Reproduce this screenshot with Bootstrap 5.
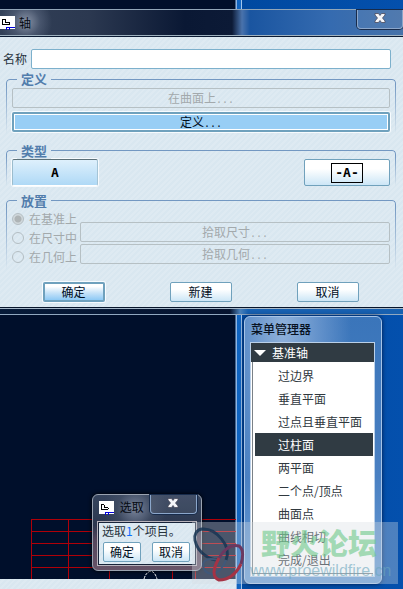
<!DOCTYPE html>
<html lang="zh-CN">
<head>
<meta charset="utf-8">
<meta name="viewport" content="width=device-width, initial-scale=1">
<title>轴</title>
<link href="https://cdn.jsdelivr.net/npm/bootstrap@5.3.0/dist/css/bootstrap.min.css" rel="stylesheet">
<style>
body{font:12px/16px "Noto Sans CJK SC",sans-serif;color:#27333d;background:#000f2b}
.desktop{min-height:100vh;background:linear-gradient(90deg,#000f2b 235px,#001a3a 235px,#8fb5e2 236px,#8fb5e2 237px,#0d62bd 237px,#1468c4 241px,#a3c6ec 241px,#a3c6ec 242px,#0049a0 242px,#0450ad)}
.scene{left:0;bottom:0;width:236px;height:72px}
.strip{left:0;bottom:0;width:236px;height:10px}
.striped,.strip{background:repeating-linear-gradient(135deg,#d9e7f0 0 2px,#deeaf2 2px 4px)}
.axis-win{padding-top:9px}
.axis-frame{border-top:1px solid #91a6b8;border-bottom:1px solid #91a8c0;background:linear-gradient(90deg,#061a38,#061430 230px,#4a80b8 240px,#1760b0 248px,#1760b0);padding-bottom:6px}
.axis-title{height:27px;border-bottom:1px solid #0a1a33;box-shadow:inset 0 -1px #9fb2c0;background:radial-gradient(circle at 26px 12px,#8792a5,#59667e99 14px,#59667e00 26px),linear-gradient(90deg,#334158,#2b3850 90px,#0a1834 185px,#0c1a36 232px,#4a73ac 242px,#1a55a0 250px,#356bb0 330px,#4672a9)}
.win-name{font-size:12px;color:#050a12}
.close-btn{height:19px;width:46px;padding:0 0 2px;border:1px solid #8ba6ca;border-top:0;border-radius:0 0 4px 4px;background:#ffffff10;box-shadow:0 0 0 1px #172b4b;line-height:0}
.axis-body{padding:12px 7px 5px 6px;border-bottom:1px solid #07152b;box-shadow:0 1px #a7b8c9}
.name-row{margin:0 5px 2px -3px;gap:4px}
.name-box{height:20px;padding:0 4px;font-size:12px;border:1px solid #7cb0cc;border-radius:2px;background:#fff}
.group{position:relative;padding:0 6px 2px;margin-bottom:9px}
.group::before{content:"";position:absolute;inset:-9px 0 0 0;border:1px solid #7398c2;border-bottom:0;border-radius:4px 4px 0 0;-webkit-mask:linear-gradient(#000 6px,transparent);mask:linear-gradient(#000 6px,transparent);pointer-events:none}
.group legend{position:relative;z-index:1;margin:0 0 1px 11px;padding:0 4px;font-size:13px;line-height:16px;font-weight:700;color:#527dac;background:#dbe8f1}
.group>div{position:relative}
.group.types{padding-bottom:0;margin-bottom:7px}
.group.place{padding-bottom:4px;margin-bottom:12px}
.group.types legend,.group.place legend{margin-bottom:0}
.group legend{margin-left:5px}
.ui-btn{height:20px;padding:0 6px;border:1px solid #70a1bc;border-radius:2px;background:linear-gradient(#fff 35%,#cce6f6);color:#000d1c;font-size:12px;line-height:16px;white-space:nowrap;text-align:center}
.ui-btn:disabled{background:transparent;border-color:#b6c0c4;color:#a3a9ac}
.ui-btn.strong{border:2px solid #6fa1bd;box-shadow:0 0 0 1px #f7fbfe}
.ui-btn.wide{background:#98cef5;box-shadow:0 0 0 1px #f7fbfe,inset 0 0 0 1px #fff}
.ui-btn.ok{background:linear-gradient(#fff 15%,#c7e3f8 55%,#8dc9f5)}
.dots{font:10px/12px "Liberation Mono",monospace}
.stack{gap:4px}
.type-btn{width:86px;height:27px;padding:0;font:bold 13px/16px "DejaVu Sans Mono",monospace;color:#000}
.type-btn.on{background:linear-gradient(#def0fc,#afd9f6);border-color:#5b7078 #a4c4d6 #fff #9bbccd;box-shadow:0 0 0 1px #f7fbfe}
.boxed{display:inline-block;border:1px solid #000;width:32px;height:20px;line-height:17px}
.place-row{gap:3px}
.opt{height:19px;gap:5px;color:#a3a9ac;white-space:nowrap}
.opt input{appearance:none;width:12px;height:12px;margin:0;border:1px solid #b4bec3;border-radius:50%}
.opt input:checked{background:radial-gradient(circle,#aeb4b6 0 3px,#d0d8dc 4px)}
.picks{gap:2px;padding-bottom:2px}
.actions{padding:0 5px 0 4px}
.actions .ui-btn{width:62px}
.menu-win{top:316px;left:244px;width:138px;padding:4px 6px 6px 5px;border:1px solid #a6c4e8;border-radius:6px;background:radial-gradient(ellipse at 38px 12px,#8fb1da 0,#6f9ad0aa 40px,#6f9ad000 68px),linear-gradient(#3a75ba,#4a80c2 60%,#6a9dd5);box-shadow:0 0 4px #001a45}
.menu-win h1{font-size:12px;line-height:16px;margin:0 0 5px 1px;color:#071222}
.menu-box{border:1px solid #bad0e9;background:#fff;padding:0 1px 2px}
.menu-head{height:19px;margin:0 -1px;gap:6px;padding-left:3px;background:#303b43;color:#fff}
.menu-list{padding:2px 0 2px 2px;border-left:1px solid #7a8187;border-bottom:1px solid #7a8187}
.menu-list a{display:block;height:23px;line-height:23px;padding-left:23px;color:#30383e;text-decoration:none;white-space:nowrap}
.menu-list a.on{background:#303b43;color:#fff}
.pick-win{left:92px;top:494px;width:110px;padding:0 4px 4px;border:1px solid #9aa3b1;border-radius:6px;background:radial-gradient(circle at 42px 14px,#778299,#48546a88 18px,#48546a00 32px),linear-gradient(#36445d,#2c3850 40%,#55465c 60%,#675468);box-shadow:0 0 4px #000}
.pick-title{height:26px;gap:6px}
.pick-title .logo{margin:6px 0 0 2px}
.pick-title .win-name{margin-top:4px}
.pick-title .close-btn{width:48px}
.pick-body{padding:1px 6px 3px 5px;border:1px solid #b8b4bc;box-shadow:inset 0 0 0 1px #172339}
.pick-text{margin:0 0 3px -1px}
.pick-body .ui-btn{width:38px;padding:0}
.stamp{left:192px;top:522px;width:206px;height:62px;background:#d8dde359}
.stamp-mark{left:-4px;top:2px}
.stamp-name{left:69px;top:0;font-size:29px;line-height:40px;font-weight:900;color:#6cc88999}
.stamp-url{left:58px;top:39px;font:16px/20px "Liberation Sans",sans-serif;color:#6aa6bd99}
</style>
<script src="https://cdn.jsdelivr.net/npm/bootstrap@5.3.0/dist/js/bootstrap.bundle.min.js"></script>
</head>
<body>
<div class="desktop position-relative overflow-hidden">
  <svg class="scene position-absolute" viewBox="0 0 236 72" fill="none" stroke="#b00008" aria-hidden="true">
    <path d="M31 2.500H236M31 14.500H236M31 26.500H236M31 38.500H236M31 50.500H236M31.500 2V62M68.500 2V62M109.500 50V62M172.500 50V62M195.500 50V62"/>
    <path d="M144 62q2-7 7-8q4 1 6 8" stroke="#fff" stroke-dasharray="3 1"/>
  </svg>
  <div class="strip position-absolute"></div>

  <section class="axis-win position-relative">
    <div class="axis-frame">
      <header class="axis-title d-flex justify-content-between">
        <div class="d-flex align-items-center gap-1">
          <svg class="logo" width="15" height="14" viewBox="0 0 15 14" shape-rendering="crispEdges" aria-hidden="true"><path d="M0 0h15v13H0z" fill="#fff"/><path d="M2.500 3.500h3v3h4v2h-7z" fill="none" stroke="#000"/><path d="M15 11.500H6.500V14M9.500 11v3" fill="none" stroke="#00d"/></svg>
          <span class="win-name">轴</span>
        </div>
        <button class="close-btn" type="button" aria-label="关闭"><svg width="12" height="10" viewBox="0 0 12 10" aria-hidden="true"><path d="M1 .500h3.500l1.500 2 1.500-2H11v1.500L8.500 5 11 8v1.500H7.500L6 7.500l-1.500 2H1V8l2.500-3L1 2z" fill="#f4f5f8" stroke="#4a4a5c" stroke-width=".8"/></svg></button>
      </header>
      <form class="axis-body striped" onsubmit="return false">
        <div class="name-row d-flex align-items-center">
          <label for="axisName" class="text-nowrap">名称</label>
          <input id="axisName" type="text" class="name-box flex-grow-1">
        </div>
        <fieldset class="group">
          <legend class="float-none w-auto d-table">定义</legend>
          <div class="stack d-flex flex-column">
            <button class="ui-btn" type="button" disabled>在曲面上<span class="dots">...</span></button>
            <button class="ui-btn strong wide" type="button">定义<span class="dots">...</span></button>
          </div>
        </fieldset>
        <fieldset class="group types">
          <legend class="float-none w-auto d-table">类型</legend>
          <div class="d-flex justify-content-between">
            <button class="ui-btn type-btn on" type="button">A</button>
            <button class="ui-btn type-btn" type="button"><span class="boxed">-A-</span></button>
          </div>
        </fieldset>
        <fieldset class="group place">
          <legend class="float-none w-auto d-table">放置</legend>
          <div class="place-row d-flex align-items-end">
            <div>
              <label class="opt d-flex align-items-center"><input type="radio" name="place" checked disabled>在基准上</label>
              <label class="opt d-flex align-items-center"><input type="radio" name="place" disabled>在尺寸中</label>
              <label class="opt d-flex align-items-center"><input type="radio" name="place" disabled>在几何上</label>
            </div>
            <div class="picks d-flex flex-column flex-grow-1">
              <button class="ui-btn" type="button" disabled>拾取尺寸<span class="dots">...</span></button>
              <button class="ui-btn" type="button" disabled>拾取几何<span class="dots">...</span></button>
            </div>
          </div>
        </fieldset>
        <div class="actions">
          <div class="row g-0">
            <div class="col d-flex justify-content-center"><button class="ui-btn strong ok" type="submit">确定</button></div>
            <div class="col d-flex justify-content-center"><button class="ui-btn" type="button">新建</button></div>
            <div class="col d-flex justify-content-center"><button class="ui-btn" type="button">取消</button></div>
          </div>
        </div>
      </form>
    </div>
  </section>

  <section class="menu-win position-absolute">
    <h1>菜单管理器</h1>
    <div class="menu-box">
      <div class="menu-head d-flex align-items-center"><svg width="12" height="6" viewBox="0 0 12 6" aria-hidden="true"><path d="M0 0h12L6 6z" fill="#fff"/></svg>基准轴</div>
      <nav class="menu-list">
        <a href="#">过边界</a>
        <a href="#">垂直平面</a>
        <a href="#">过点且垂直平面</a>
        <a href="#" class="on">过柱面</a>
        <a href="#">两平面</a>
        <a href="#">二个点/顶点</a>
        <a href="#">曲面点</a>
        <a href="#">曲线相切</a>
        <a href="#">完成/退出</a>
      </nav>
    </div>
  </section>

  <section class="pick-win position-absolute">
    <header class="pick-title d-flex align-items-start">
      <svg class="logo" width="15" height="14" viewBox="0 0 15 14" shape-rendering="crispEdges" aria-hidden="true"><path d="M0 0h15v13H0z" fill="#fff"/><path d="M2.500 3.500h3v3h4v2h-7z" fill="none" stroke="#000"/><path d="M15 11.500H6.500V14M9.500 11v3" fill="none" stroke="#00d"/></svg>
      <span class="win-name text-nowrap">选取</span>
      <button class="close-btn ms-auto" type="button" aria-label="关闭"><svg width="12" height="10" viewBox="0 0 12 10" aria-hidden="true"><path d="M1 .500h3.500l1.500 2 1.500-2H11v1.500L8.500 5 11 8v1.500H7.500L6 7.500l-1.500 2H1V8l2.500-3L1 2z" fill="#f4f5f8" stroke="#4a4a5c" stroke-width=".8"/></svg></button>
    </header>
    <div class="pick-body striped">
      <div class="pick-text text-nowrap">选取<span class="text-primary">1</span>个项目。</div>
      <div class="d-flex justify-content-between">
        <button class="ui-btn" type="button">确定</button>
        <button class="ui-btn" type="button">取消</button>
      </div>
    </div>
  </section>

  <div class="stamp position-absolute pe-none">
    <svg class="stamp-mark position-absolute" width="58" height="58" viewBox="0 0 58 58" fill="none" aria-hidden="true">
      <path d="M38 36C44 22 28 4 14 5 2 7 6 24 18 32q6 4 12 4" stroke="#173553" stroke-width="3" opacity=".85"/>
      <path d="M30 36q-13-3-15 4 0 9 9 10 9-1 14-14" stroke="#405879" stroke-width="2"/>
      <path d="M31 34q9-15 20-12 6 4 2 18" stroke="#6c3860" stroke-width="3"/>
      <path d="M31 34q-10 18 0 22 14 0 22-16" stroke="#a53345" stroke-width="3"/>
    </svg>
    <div class="stamp-name position-absolute text-nowrap">野火论坛</div>
    <div class="stamp-url position-absolute text-nowrap">www.proewildfire.cn</div>
  </div>
</div>
</body>
</html>
